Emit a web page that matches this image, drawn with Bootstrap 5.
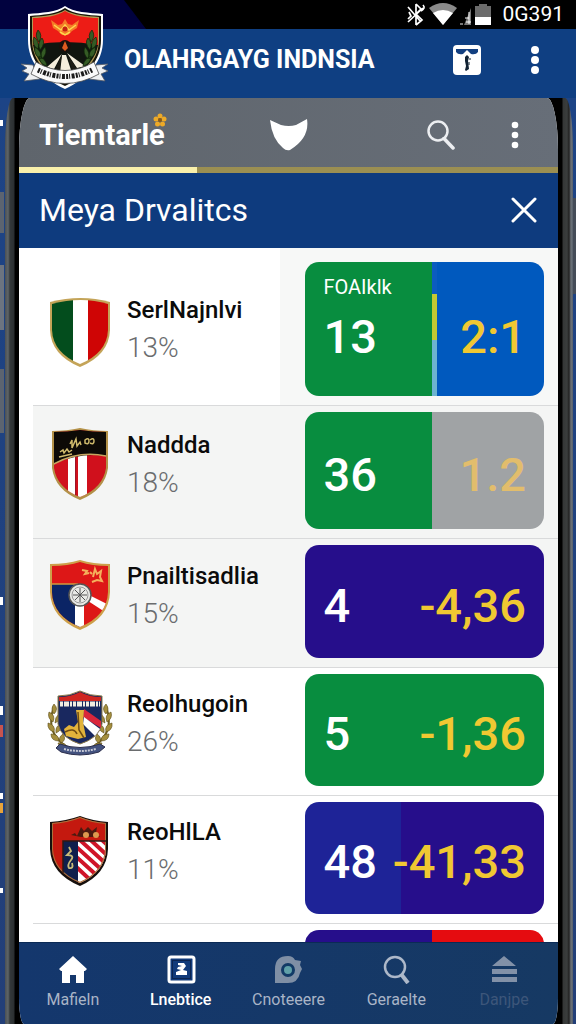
<!DOCTYPE html>
<html lang="id">
<head>
<meta charset="utf-8">
<meta name="viewport" content="width=device-width, initial-scale=1">
<title>Olahraga Indonesia</title>
<link href="https://cdn.jsdelivr.net/npm/bootstrap@5.3.0/dist/css/bootstrap.min.css" rel="stylesheet">
<style>
  body { font-family: Roboto, "Liberation Sans", sans-serif; background: #0e3b7b; height: 100vh; overflow: hidden; }
  svg { display: block; flex: none; }
  button { background: none; border: 0; padding: 0; color: #fff; }

  .status-bar { height: 29px; background: #000; color: #fff; gap: 3px; padding-right: 12px; font-size: 21px; line-height: 29px; }
  .status-edge { position: absolute; left: 0; top: 0; width: 146px; height: 29px; background: #01023f; clip-path: polygon(0 0, 124px 0, 146px 29px, 0 29px); }
  .club-logo { position: absolute; left: 20px; top: 5px; z-index: 2; }
  .app-bar { height: 69px; background: #0f3f82; padding: 0 36px 8px 124px; }
  .app-title { font-size: 25px; line-height: 36px; font-weight: 700; color: #fff; }

  /* phone shell */
  .shell { min-height: 0; padding-left: 5px; padding-right: 3px; background:
      linear-gradient(#5c6470, #5c6470) 0 94px / 4px 41px no-repeat,
      linear-gradient(#6c7480, #6c7480) 0 167px / 4px 65px no-repeat,
      linear-gradient(#5c6470, #5c6470) 0 271px / 4px 64px no-repeat,
      linear-gradient(#fff, #fff) 0 22px / 3px 6px no-repeat,
      linear-gradient(#fff, #fff) 0 499px / 3px 8px no-repeat,
      linear-gradient(#fff, #fff) 0 608px / 3px 9px no-repeat,
      linear-gradient(#c7544f, #c7544f) 0 627px / 3px 12px no-repeat,
      linear-gradient(#fff, #fff) 0 695px / 3px 6px no-repeat,
      linear-gradient(#e8a33a, #e8a33a) 0 705px / 3px 10px no-repeat,
      linear-gradient(#fff, #fff) 0 790px / 3px 5px no-repeat,
      linear-gradient(#454c58, #454c58) 100% 100px / 3px 96px no-repeat,
      linear-gradient(#1d4486, #233f78); }
  .bezel { min-height: 0; padding: 0 15px 0 14px; border-radius: 8px 8px 0 0 / 50px 50px 0 0; background:
      linear-gradient(to right, #4b5054 0, #5f6568 3px, #33383a 5px, #2b2f31 9px, #000 10px, #000 15px, transparent 15px) left / 30px 100% no-repeat,
      linear-gradient(to left, #565e68 0, #6d737a 2px, #222 4px, #3a3d3d 6px, #343636 10px, #000 11px, #000 17px, transparent 17px) right / 30px 100% no-repeat,
      #000; }
  .phone-screen { min-height: 0; overflow: hidden; background: #fff; border-radius: 11px 11px 5px 5px / 52px 52px 26px 26px; }

  .tab-bar { display: grid; grid-template-columns: 1fr auto 1fr; height: 69px; background: linear-gradient(to right, #5f656c, #676e78); padding: 4px 20px 0; }
  .tab-name { font-size: 29px; line-height: 36px; font-weight: 700; color: #fff; }
  .flower { position: absolute; right: -2px; top: -4px; }
  .tab-actions { padding-right: 19px; }
  .season { height: 6px; background: #9b8f52; border-radius: 0; }
  .season .progress-bar { background: #f9f0ab; width: 33%; }
  .panel-head { height: 75px; background: #0e3b7e; padding: 0 21px 2px 20px; color: #fff; }
  .panel-title { font-size: 32px; line-height: 40px; font-weight: 400; }

  .teams { min-height: 0; overflow: hidden; background: linear-gradient(to right, #fff 14px, #fbfbfa 14px); }
  .team { display: grid; grid-template-columns: 66px minmax(0, 1fr) 48%; column-gap: 14px; align-items: center;
          margin-left: 14px; padding: 6px 14px 9px 14px; border-bottom: 1px solid #d9dadb; }
  .team.first { padding-top: 14px; background: linear-gradient(to right, #fff 47%, #f7f8f7 47%); }
  .team.shaded { background: #f4f5f4; }
  .team.clear { background: #fff; }
  .team-info, .crest { padding-bottom: 14px; }
  .first .team-info { padding-bottom: 0; }
  .first .crest { padding-bottom: 0; padding-top: 8px; }
  .team-name { font-size: 24px; line-height: 38px; font-weight: 500; color: #0b0b0b; white-space: nowrap; }
  .team-pct { font-size: 28px; line-height: 38px; font-weight: 300; color: #6a6c6e; }
  .score { display: flex; min-height: 112px; border-radius: 14px; overflow: hidden; font-size: 47px; line-height: 50px; font-weight: 500; color: #fff; }
  .score.tall { min-height: 134px; }
  .score.mid { min-height: 117px; }
  .score.base { min-height: 113px; }
  .score > div { display: flex; flex-direction: column; justify-content: center; padding-top: 8px; }
  .score .home { padding-left: 18px; flex: 0 0 53%; }
  .score .home.narrow { flex-basis: 40%; }
  .score .home.labelled { justify-content: flex-start; padding-top: 12px; gap: 12px; }
  .score .away { flex: 1 1 0; min-width: 0; align-items: flex-end; padding-right: 18px; color: #f0c832; white-space: nowrap; }
  .score-label { font-size: 20px; line-height: 26px; font-weight: 400; }
  .split-mark { flex: 0 0 5px; background: linear-gradient(#0b5cc0 0 24%, #c3c832 24% 58%, #6db3d0 58%); }
  .green { background: #088d3f; }
  .blue { background: #0059be; }
  .silver { background: #a0a3a5; }
  .violet { background: #260e8b; }
  .indigo { background: #1e2397; }
  .red { background: #e50c10; }
  .score .faded { color: #e2bd6c; }

  .dock { background: linear-gradient(to right, #14376d, #163963); border-top: 1px solid #0b2a55; height: 82px; padding: 11px 0 0; }
  .dock a { flex: 1 1 0; color: #a9b4c6; font-size: 16px; line-height: 22px; text-decoration: none; display: flex; flex-direction: column; align-items: center; gap: 5px; }
  .dock a.active { color: #fff; font-weight: 500; }
  .dock a.off { color: #3d567a; }
</style>
</head>
<body class="d-flex flex-column position-relative">

<svg class="club-logo" width="90" height="86" viewBox="0 0 90 86" aria-label="Lambang">
  <path d="M45 1C37 7 21 8 8 9v26c0 22 14 38 37 49 23-11 38-27 38-49V9C69 8 53 7 45 1z" fill="#fff"/>
  <path d="M45 3C37 9 22 10 10 11v24c0 20 13 36 35 46 22-10 36-26 36-46V11C68 10 53 9 45 3z" fill="#151308"/>
  <path d="M45 5C37 10 24 11 12 12v23c0 18 12 34 33 44 21-10 34-26 34-44V12C67 11 53 10 45 5z" fill="#b09a55"/>
  <path d="M45 6C37 11 24 13 13 13v28q32-5 65 0V13C67 13 53 11 45 6z" fill="#ed1c16"/>
  <path d="M13 40q32-6 65 0c-2 13-14 28-33 37-19-9-30-24-32-37z" fill="#10150f"/>
  <path d="M42 49 27 62l7 2zM42 50l-2 18h12l-6-18zM47 48l10 15 8-2z" fill="#f5eedc"/>
  <path d="M42 49l-7 16 4 3zM47 49l6 18 4-3z" fill="#1d1c14"/>
  <circle cx="45" cy="41" r="6" fill="#1a100c"/><path d="M45 36l3 7-3 3-3-3z" fill="#e05a20"/>
  <path d="M31 15l7 5 4-1 3-5 3 5 4 1 7-5-2 8-5 3-4 4h-6l-4-4-5-3z" fill="#f57b28"/>
  <path d="M34 20l7 5 4-5 4 5 7-5M40 27l5 3 5-3" fill="none" stroke="#ffd84c" stroke-width="1.500"/><circle cx="45" cy="24" r="2.500" fill="#c42214"/>
  <g fill="#355b25" stroke="#0f2509" stroke-width=".7"><path d="M18 25q5 5 1 12-5-6-1-12zM14 32q6 4 4 12-7-4-4-12zM22 33q4 5-2 12-3-7 2-12zM15 42q7 4 6 12-8-4-6-12zM25 42q3 6-3 12-3-6 3-12zM19 51q7 3 8 10-8-2-8-10z"/><path d="M72 25q-5 5-1 12 5-6 1-12zM76 32q-6 4-4 12 7-4 4-12zM68 33q-4 5 2 12 3-7-2-12zM75 42q-7 4-6 12 8-4 6-12zM65 42q-3 6 3 12 3-6-3-12zM71 51q-7 3-8 10 8-2 8-10z"/></g>
  <path d="M1 59l12 1 4 10 3 4-16 2 5-7-7-3 5-3zM88 59l-12 1-4 10-3 4 16 2-4-7 7-3-6-3z" fill="#eef0f2" stroke="#555b63" stroke-width=".8"/>
  <path d="M16 57q29 17 58 0l5 12q-34 19-68 0z" fill="#fafafa" stroke="#4d4d4d" stroke-width=".8"/>
  <path d="M18 65q27 13 54 0" fill="none" stroke="#1b1b1b" stroke-width="5" stroke-dasharray="2 1 1 1.500 3 1.200"/>
</svg>

<div class="status-bar d-flex align-items-center justify-content-end flex-shrink-0 position-relative">
  <div class="status-edge"></div>
  <svg width="20" height="24" viewBox="0 0 20 24" fill="none" stroke="#fff" stroke-width="1.700"><path d="M2 4l13 15M2 19L17 5M10 1v21M10 1l5 5-5 5 6 6-6 5M3 9l2 4-3 3M17 2q3 3-2 6"/></svg>
  <svg width="28" height="24" viewBox="0 0 28 24"><path d="M0 5Q14-5 28 5L14 22z" fill="#8b8b8b"/><path d="M4 10q10-6 20 0L14 22z" fill="#fff"/></svg>
  <svg width="12" height="22" viewBox="0 0 12 22"><path d="M11 4v17H4zM0 19h3v2H0z" fill="#777"/><path d="M9 8v12M5 14h4M6 18h5" stroke="#fff"/></svg>
  <svg width="16" height="24" viewBox="0 0 16 24"><path d="M0 3h4V1h8v2h4v11H0z" fill="#6b6b6b"/><path d="M0 14h16v8H0z" fill="#fff"/></svg>
  <span class="ms-2">0G391</span>
</div>

<header class="app-bar d-flex align-items-center flex-shrink-0">
  <h1 class="app-title m-0 flex-grow-1 text-nowrap">OLAHRGAYG INDNSIA</h1>
  <button type="button" aria-label="Kalender"><svg width="30" height="32" viewBox="0 0 30 32"><rect x="1" y="1" width="28" height="30" rx="4" fill="#fff"/><path d="M4 5h22v3q-2 3-7 2l-4-4-4 4q-5 1-7-2z" fill="#123f80"/><path d="M13 13l2-2 2 2-1 4 1 8-3 2-1-1 1-4-1-5z" fill="#123"/><path d="M18 14v2M17 18v3" stroke="#123"/></svg></button>
  <button type="button" class="ms-5" aria-label="Menu"><svg width="10" height="28" viewBox="0 0 10 28" fill="#fff"><circle cx="5" cy="4" r="4"/><circle cx="5" cy="14" r="4"/><circle cx="5" cy="24" r="4"/></svg></button>
</header>

<div class="shell d-flex flex-column flex-grow-1">
<div class="bezel d-flex flex-column flex-grow-1">
<main class="phone-screen d-flex flex-column flex-grow-1">

  <div class="tab-bar align-items-center flex-shrink-0">
    <div><span class="tab-name position-relative d-inline-block">Tiemtarle
      <svg class="flower" width="14" height="14" viewBox="0 0 14 14" fill="#eeaa27"><circle cx="7" cy="3" r="2.500"/><circle cx="11" cy="6" r="2.500"/><circle cx="9.500" cy="11" r="2.500"/><circle cx="4.500" cy="11" r="2.500"/><circle cx="3" cy="6" r="2.500"/><circle cx="7" cy="7" r="2" fill="#8c5a12"/></svg></span></div>
    <svg width="38" height="32" viewBox="0 0 38 32"><path d="M0 1l11 5q8 2 15 0L37 0q3 19-17 31-4 1-7-2Q2 20 0 1z" fill="#fff"/></svg>
    <div class="tab-actions d-flex align-items-center justify-content-end">
      <button type="button" aria-label="Cari"><svg width="28" height="30" viewBox="0 0 28 30" fill="none" stroke="#eceef1"><circle cx="11" cy="11" r="9.500" stroke-width="2.500"/><path d="M17 18.500 26 28" stroke-width="3.500" stroke-linecap="round"/></svg></button>
      <button type="button" class="ms-5" aria-label="Opsi"><svg class="ms-2" width="8" height="28" viewBox="0 0 8 28" fill="#fff"><circle cx="4" cy="4" r="3.300"/><circle cx="4" cy="14" r="3.300"/><circle cx="4" cy="24" r="3.300"/></svg></button>
    </div>
  </div>
  <div class="season progress flex-shrink-0"><div class="progress-bar"></div></div>

  <div class="panel-head d-flex align-items-center justify-content-between flex-shrink-0">
    <h2 class="panel-title m-0">Meya Drvalitcs</h2>
    <button type="button" aria-label="Tutup"><svg width="26" height="26" viewBox="0 0 26 26" stroke="#fff" stroke-width="3" stroke-linecap="round"><path d="M2 2l22 22M24 2L2 24"/></svg></button>
  </div>

  <div class="teams flex-grow-1">
    <div class="team first">
      <div class="crest"><svg width="66" height="70" viewBox="0 0 66 70">
        <clipPath id="s1"><path d="M5 6Q34-2 61 6v26Q60 55 33 66 6 55 5 32z"/></clipPath>
        <path d="M3 4Q34-4 63 4v28Q62 57 33 69 4 57 3 32z" fill="#c4a458"/>
        <g clip-path="url(#s1)"><path d="M0 0h26v70H0z" fill="#034d1d"/><path d="M26 0h15v70H26z" fill="#fff"/><path d="M41 0h25v70H41z" fill="#cf0505"/></g></svg></div>
      <div class="team-info"><div class="team-name">SerlNajnlvi</div><div class="team-pct">13%</div></div>
      <div class="score tall">
        <div class="home labelled green"><span class="score-label">FOAIklk</span><span>13</span></div>
        <div class="split-mark p-0"></div>
        <div class="away blue pt-3 ps-0">2:1</div>
      </div>
    </div>

    <div class="team shaded">
      <div class="crest"><svg width="66" height="72" viewBox="0 0 66 72">
        <clipPath id="s2"><path d="M7 4q14 0 26-2 12 2 26 2v36Q56 60 33 69 10 60 7 40z"/></clipPath>
        <path d="M5 3q15 0 28-3 13 3 28 3v37Q58 62 33 72 8 62 5 40z" fill="#b39148"/>
        <g clip-path="url(#s2)"><path d="M0 0h66v72H0z" fill="#d0101c"/><path d="M21 24h7v48h-7zM31 24h9v48h-9z" fill="#fff"/><path d="M28.500 24v48" stroke="#9d1526"/><path d="M0 0h66v29q-33-7-66 10z" fill="#0d0a06"/><path d="M5 37q28-16 58-8" fill="none" stroke="#c6a661" stroke-width="1.500"/></g>
        <path d="M13 24l3-2 1 3 3-4 2 3 3-2M23 16l2-4v8l4-9 1 7 3-4 1 3M38 12q4-3 4 1t-4 2zM43 12q4-3 4 1t-4 2M12 29l13-3" fill="none" stroke="#cfba6c" stroke-width="1.500"/></svg></div>
      <div class="team-info"><div class="team-name">Naddda</div><div class="team-pct">18%</div></div>
      <div class="score mid"><div class="home green">36</div><div class="away silver faded">1.2</div></div>
    </div>

    <div class="team shaded">
      <div class="crest"><svg width="66" height="70" viewBox="0 0 66 70">
        <clipPath id="s3"><path d="M5 6q16 0 28-4 12 4 28 4v26Q60 56 33 67 6 56 5 32z"/></clipPath>
        <path d="M3 4q17 0 30-4 13 4 30 4v28Q62 58 33 70 4 58 3 32z" fill="#cda04a"/>
        <g clip-path="url(#s3)"><path d="M0 0h66v72H0z" fill="#dd1717"/><path d="M0 24h33v48H0z" fill="#0b2465"/><path d="M28 36h9v36h-9z" fill="#fff"/><path d="M40 34l22 11-4 7-20-13z" fill="#fff"/><path d="M3 24h28" stroke="#d19a3c" stroke-width="1.500"/></g>
        <circle cx="33" cy="35" r="11" fill="#e9e9e6" stroke="#555" stroke-width="1.500"/><circle cx="33" cy="35" r="8" fill="none" stroke="#9a9a9a"/><path d="M33 28v14M26 35h14M28 30l10 10M38 30L28 40" stroke="#555"/>
        <path d="M35 10l5 1-2 3 4-1M46 17l2-8 2 5 4-3-1 6 2 4-5-1-5 2M45 14l-2-2" fill="none" stroke="#f4b05c" stroke-width="2"/></svg></div>
      <div class="team-info"><div class="team-name">Pnailtisadlia</div><div class="team-pct">15%</div></div>
      <div class="score base violet"><div class="home">4</div><div class="away ps-0">-4,36</div></div>
    </div>

    <div class="team clear">
      <div class="crest"><svg width="66" height="66" viewBox="0 0 66 66">
        <path d="M7 16Q-3 44 22 58M59 16q10 28-15 42" fill="none" stroke="#6e5e22" stroke-width="2"/>
        <g fill="#a58f3e" stroke="#5a4b18" stroke-width=".6"><path d="M7 14q5 5 0 10-4-5 0-10zM2 22q7 3 4 10-6-4-4-10zM12 24q3 6-4 9 0-6 4-9zM1 33q8 2 6 9-7-2-6-9zM13 34q3 6-4 9-1-6 4-9zM4 44q8 0 8 7-8 0-8-7zM16 44q4 6-2 9-4-5 2-9zM11 53q8-1 9 5-7 2-9-5z"/><path d="M59 14q-5 5 0 10 4-5 0-10zM64 22q-7 3-4 10 6-4 4-10zM54 24q-3 6 4 9 0-6-4-9zM65 33q-8 2-6 9 7-2 6-9zM53 34q-3 6 4 9 1-6-4-9zM62 44q-8 0-8 7 8 0 8-7zM50 44q-4 6 2 9 4-5-2-9zM55 53q-8-1-9 5 7 2 9-5z"/></g>
        <path d="M11 6q12 0 22-5 10 5 22 5v28q-3 14-22 20Q14 48 11 34z" fill="#19285f" stroke="#8d7a49"/>
        <path d="M12 7q12 0 21-5 9 5 21 5v4H12z" fill="#cf2620"/>
        <path d="M13 14h40" stroke="#f1ece0" stroke-width="5" stroke-dasharray="3 1 5 1 2 1"/>
        <path d="M37 19l17 12v7L36 27z" fill="#d9263b"/><path d="M37 27l16 12-5 7-12-12z" fill="#fff"/>
        <path d="M29 20h8l-1 12 3 15-8 2-12-3-2-7 5-4 5 2 4-5z" fill="#e2b33b"/><path d="M18 42q9-5 12 2M31 22l1 18 5 8" fill="none" stroke="#6f4c12" stroke-width="1.500"/>
        <path d="M13 54q20 7 40 0l5 3-6 5q-19 6-38 0l-5-4z" fill="#43527f" stroke="#2b2e4c"/><path d="M17 59q16 4 32 0" fill="none" stroke="#c6c9d6" stroke-width="2" stroke-dasharray="2 1"/></svg></div>
      <div class="team-info"><div class="team-name">Reolhugoin</div><div class="team-pct">26%</div></div>
      <div class="score green"><div class="home">5</div><div class="away ps-0">-1,36</div></div>
    </div>

    <div class="team clear">
      <div class="crest"><svg width="66" height="70" viewBox="0 0 66 70">
        <clipPath id="s5"><path d="M5 7q15-1 28-6 12 5 26 6v26Q58 56 33 67 6 56 5 33z"/></clipPath>
        <clipPath id="s5b"><path d="M31 25h35v47H31z"/></clipPath>
        <path d="M3 6q16-1 30-6 13 5 28 6v27Q60 58 33 70 4 58 3 33z" fill="#16100d"/>
        <g clip-path="url(#s5)"><path d="M0 0h66v72H0z" fill="#c4190f"/><path d="M16 25h15v47H16z" fill="#101f4c"/><path d="M31 25h35v47H31z" fill="#fff"/>
        <path d="M24 16l44 40M24 26l44 40M24 36l44 40M24 6l50 46M36 6l40 38M24 46l30 28" stroke="#cf1428" stroke-width="4" clip-path="url(#s5b)"/>
        <path d="M5 7q15-1 28-6 12 5 26 6v26Q58 56 33 67 6 56 5 33z" fill="none" stroke="#a9713b" stroke-width="2"/><path d="M16 62V25h46" fill="none" stroke="#2d1a16" stroke-width="1.500"/></g>
        <path d="M24 19l4-2 2 3 4-9 3 4 4-4 4 4 5-4-1 6 4 4H34z" fill="#4b1a10"/><circle cx="39" cy="19" r="3" fill="#dc9a4f"/><circle cx="49" cy="19" r="3" fill="#dc9a4f"/>
        <path d="M22 31l2 4-4 4q8 0 4 5t-2 8q5 1 3-5" fill="none" stroke="#c9bc79" stroke-width="1.800"/></svg></div>
      <div class="team-info"><div class="team-name">ReoHlLA</div><div class="team-pct">11%</div></div>
      <div class="score"><div class="home narrow indigo">48</div><div class="away violet ps-0">-41,33</div></div>
    </div>

    <div class="team clear">
      <div></div><div></div>
      <div class="score"><div class="home violet"></div><div class="away red"></div></div>
    </div>
  </div>

  <nav class="dock d-flex flex-shrink-0" aria-label="Navigasi utama">
    <a href="#"><svg width="30" height="30" viewBox="0 0 30 30"><path d="M15 2l14 13-2 2h-1v12h-8v-8h-6v8H4V17H3l-2-2z" fill="#fff"/></svg>Mafieln</a>
    <a href="#" class="active"><svg width="30" height="30" viewBox="0 0 30 30"><rect x="3" y="3" width="25" height="25" rx="2" fill="#113a7a" stroke="#fff" stroke-width="3"/><rect x="6.500" y="6.500" width="18" height="18" fill="none" stroke="#0b2450"/><path d="M12 9h6l2 3-3 4 4 1v4H10v-3l5-2-4-1 1-2 4-1-4-1z" fill="#fff"/></svg>Lnebtice</a>
    <a href="#"><svg width="30" height="30" viewBox="0 0 30 30"><path d="M2 15Q2 2 15 2q5 0 7 4l6 1-1 4 2 4-2 4q-2 10-12 10H2z" fill="#7f8fa5"/><circle cx="15" cy="16" r="5.500" fill="#5fa0a8" stroke="#123a66" stroke-width="3"/></svg>Cnoteeere</a>
    <a href="#"><svg width="30" height="30" viewBox="0 0 30 30" fill="none" stroke="#adb8c9"><circle cx="14" cy="13" r="10" stroke-width="2.500"/><path d="M20 20l7 9" stroke-width="4"/></svg>Geraelte</a>
    <a href="#" class="off"><svg width="30" height="30" viewBox="0 0 30 30" fill="#8291a8"><path d="M15 2l12 10H3zM3 15h25v5H3zM3 23h25v5H3z"/></svg>Danjpe</a>
  </nav>
</main>
</div>
</div>

<script src="https://cdn.jsdelivr.net/npm/bootstrap@5.3.0/dist/js/bootstrap.bundle.min.js"></script>
</body>
</html>
